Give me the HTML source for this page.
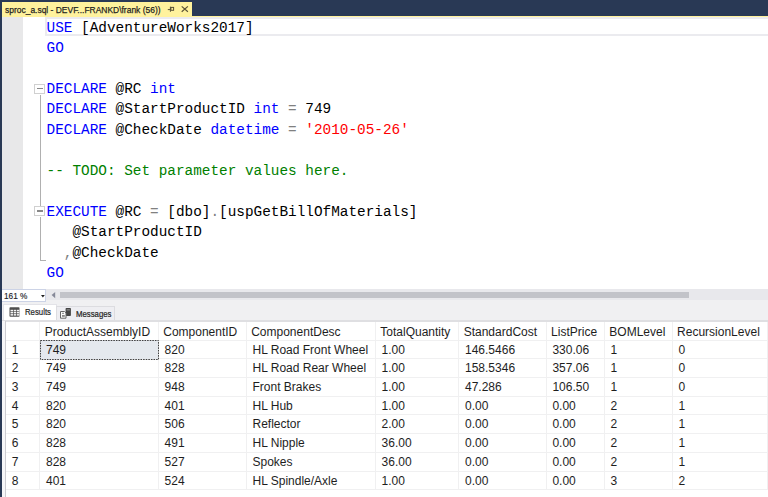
<!DOCTYPE html>
<html><head><meta charset="utf-8">
<style>
*{margin:0;padding:0;box-sizing:border-box}
html,body{width:768px;height:497px;overflow:hidden;background:#293955;position:relative}
div{position:absolute}
#tab{left:2px;top:1.8px;width:190px;height:15.6px;background:#fff29d}
#tabline{left:2px;top:15.5px;width:766px;height:1.9px;background:#fff29d}
#tabtxt{left:4.6px;top:2.4px;font:9.5px/15px "Liberation Sans",sans-serif;color:#1e1e1e;-webkit-text-stroke:0.25px #1e1e1e;white-space:nowrap;transform-origin:0 0;transform:scaleX(0.89)}
#editor{left:2px;top:17.4px;width:766px;height:271.8px;background:#fff}
#margin{left:2px;top:17.4px;width:20.5px;height:271.8px;background:#e8e8e9}
#curline{left:45.2px;top:17.4px;width:730px;height:19.1px;border:2.3px solid #ebebef;border-right:none}
.code{left:46.5px;font:14.38px/20px "Liberation Mono",monospace;white-space:pre;color:#000}
.k{color:#0000ff}.s{color:#ff0000}.c{color:#008000}.g{color:#808080}
.fold{width:11px;height:10.2px;border:1.3px solid #d0d0d0;background:#fff}
.fold:after{content:"";position:absolute;left:2.2px;top:3.2px;width:6px;height:1.6px;background:#888}
.vl{width:1px;background:#b0b0b0}
#bar{left:2px;top:289.1px;width:766px;height:11.4px;background:#e8e8ec}
#zoom{left:2.2px;top:289.1px;width:44.3px;height:12.6px;background:#fff;border:1px solid #ccd3e6;border-left:none}
#zoomtxt{left:4.2px;top:289.7px;font:9.2px/12px "Liberation Sans",sans-serif;color:#1e1e2a;transform-origin:0 0;transform:scaleX(0.9);-webkit-text-stroke:0.15px #1e1e2a}
#thumb{left:60px;top:291.9px;width:628.8px;height:6px;background:#c2c3c9}
#strip{left:2px;top:289px;width:766px;height:34px;background:#f0f0f2}
#grid{left:2px;top:321px;width:766px;height:177px;background:#fff}
#gridtop{left:2px;top:319.8px;width:766px;height:2.7px;background:#dfdfe2}
.cell{font:12px/18.67px "Liberation Sans",sans-serif;color:#1e1e1e;white-space:nowrap}
.hl{left:5.5px;width:762px;height:1px;background:#f0f0f1}
.cl{top:322.3px;width:1px;height:167.9px;background:#f0f0f1}
.sel{background:#e5e9ee;border:1px dotted #404040}
#gridleft{left:5px;top:321px;width:1.2px;height:176px;background:#cbcbd0}
#strip2{left:2px;top:321px;width:3px;height:176px;background:#f6f6f8}
#tabR{left:2.5px;top:303.9px;width:54px;height:17px;background:#fff;border:1px solid #e3e3e8;border-bottom:none}
#tabM{left:56.2px;top:306.3px;width:58.4px;height:15px;background:#eeeef2;border:1px solid #dcdce0;border-bottom:none}
.tabt{font:9px/12px "Liberation Sans",sans-serif;color:#1e1e1e;-webkit-text-stroke:0.2px #1e1e1e;white-space:nowrap;transform-origin:0 0}
</style></head><body>
<div id="tab"></div><div id="tabline"></div>
<div id="tabtxt">sproc_a.sql - DEVF...FRANKD\frank (56))</div>
<svg style="position:absolute;left:0;top:0" width="768" height="20"><g fill="none" stroke="#5a5236" stroke-width="1"><path d="M167.8 9.6 H170.4"/><rect x="170.9" y="7.4" width="2.7" height="2.9"/><path d="M170.4 6.7 V11.8"/><path d="M181.7 6.4 L187.9 11.7 M187.9 6.4 L181.7 11.7" stroke-width="1.2"/></g></svg>
<div id="editor"></div><div id="margin"></div><div id="curline"></div>
<div class="code" style="top:17.50px"><span class="k">USE</span> [AdventureWorks2017]</div>
<div class="code" style="top:37.97px"><span class="k">GO</span></div>
<div class="code" style="top:78.91px"><span class="k">DECLARE</span> @RC <span class="k">int</span></div>
<div class="code" style="top:99.38px"><span class="k">DECLARE</span> @StartProductID <span class="k">int</span> <span class="g">=</span> 749</div>
<div class="code" style="top:119.85px"><span class="k">DECLARE</span> @CheckDate <span class="k">datetime</span> <span class="g">=</span> <span class="s">'2010-05-26'</span></div>
<div class="code" style="top:160.79px"><span class="c">-- TODO: Set parameter values here.</span></div>
<div class="code" style="top:201.73px"><span class="k">EXECUTE</span> @RC <span class="g">=</span> [dbo]<span class="g">.</span>[uspGetBillOfMaterials]</div>
<div class="code" style="top:222.20px">   @StartProductID</div>
<div class="code" style="top:242.67px">  <span class="g">,</span>@CheckDate</div>
<div class="code" style="top:263.14px"><span class="k">GO</span></div>
<div class="fold" style="left:34.3px;top:83.6px"></div>
<div class="vl" style="left:40px;top:95px;height:110.5px"></div>
<div class="fold" style="left:34.3px;top:206px"></div>
<div class="vl" style="left:40px;top:217px;height:44px"></div>
<div style="left:40px;top:260px;width:6px;height:1px;background:#b0b0b0"></div>
<div id="strip"></div><div id="bar"></div><div id="zoom"></div><div id="zoomtxt">161 %</div><div id="thumb"></div>
<svg style="position:absolute;left:0;top:285px" width="70" height="20"><path d="M41 10 H44.8 L42.9 12.4 Z" fill="#1e1e1e"/><path d="M55.2 7 V13.2 L51.6 10.1 Z" fill="#868999"/></svg>
<div id="tabR"></div><div id="tabM"></div>
<div id="grid"></div><div id="gridtop"></div>
<div id="strip2"></div><div id="gridleft"></div>
<div class="tabt" style="left:24.6px;top:306.3px;transform:scaleX(0.865)">Results</div>
<div class="tabt" style="left:76.3px;top:307.9px;transform:scaleX(0.865)">Messages</div>
<svg style="position:absolute;left:0;top:300px" width="80" height="22"><rect x="9.5" y="7.3" width="10" height="9.4" rx="0.8" fill="#4e4e4e"/><rect x="10.5" y="9.8" width="2.5" height="1.5" fill="#f4f4f4"/><rect x="10.5" y="11.9" width="2.5" height="1.5" fill="#f4f4f4"/><rect x="10.5" y="14.1" width="2.5" height="1.5" fill="#f4f4f4"/><rect x="13.7" y="9.8" width="2.5" height="1.5" fill="#f4f4f4"/><rect x="13.7" y="11.9" width="2.5" height="1.5" fill="#f4f4f4"/><rect x="13.7" y="14.1" width="2.5" height="1.5" fill="#f4f4f4"/><rect x="16.9" y="9.8" width="2.5" height="1.5" fill="#f4f4f4"/><rect x="16.9" y="11.9" width="2.5" height="1.5" fill="#f4f4f4"/><rect x="16.9" y="14.1" width="2.5" height="1.5" fill="#f4f4f4"/><rect x="65.6" y="8" width="5.3" height="8" rx="0.8" fill="#444"/><rect x="66.6" y="9" width="3.3" height="1.6" fill="#777"/><path d="M60.5 11.5 H64.5 L66 13 V18.2 H60.5 Z" fill="#fafafa" stroke="#666" stroke-width="1"/><rect x="62" y="15" width="2.8" height="1.8" fill="#888"/><path d="M62 13.3 H64" stroke="#666" stroke-width="0.8"/></svg>
<div class="hl" style="top:339.70px"></div>
<div class="hl" style="top:358.39px"></div>
<div class="hl" style="top:377.08px"></div>
<div class="hl" style="top:395.77px"></div>
<div class="hl" style="top:414.46px"></div>
<div class="hl" style="top:433.15px"></div>
<div class="hl" style="top:451.84px"></div>
<div class="hl" style="top:470.53px"></div>
<div class="hl" style="top:489.22px"></div>
<div class="cl" style="left:39.40px"></div>
<div class="cl" style="left:157.95px"></div>
<div class="cl" style="left:245.90px"></div>
<div class="cl" style="left:375.00px"></div>
<div class="cl" style="left:458.40px"></div>
<div class="cl" style="left:545.80px"></div>
<div class="cl" style="left:604.00px"></div>
<div class="cl" style="left:671.80px"></div>
<div class="cl" style="left:766.90px"></div>
<svg style="position:absolute;left:0;top:0" width="768" height="497"><rect x="40" y="340.2" width="118.5" height="19.2" fill="#e5e9ee"/><rect x="40.5" y="340.5" width="118" height="19" fill="none" stroke="#404040" stroke-width="1" stroke-dasharray="1.6 1"/></svg>
<div class="cell" style="left:44.70px;top:322.70px">ProductAssemblyID</div>
<div class="cell" style="left:163.25px;top:322.70px">ComponentID</div>
<div class="cell" style="left:251.20px;top:322.70px">ComponentDesc</div>
<div class="cell" style="left:380.30px;top:322.70px">TotalQuantity</div>
<div class="cell" style="left:463.70px;top:322.70px">StandardCost</div>
<div class="cell" style="left:551.10px;top:322.70px">ListPrice</div>
<div class="cell" style="left:609.30px;top:322.70px">BOMLevel</div>
<div class="cell" style="left:677.10px;top:322.70px">RecursionLevel</div>
<div class="cell" style="left:11.7px;top:340.70px">1</div>
<div class="cell" style="left:46.00px;top:340.70px">749</div>
<div class="cell" style="left:164.55px;top:340.70px">820</div>
<div class="cell" style="left:252.50px;top:340.70px">HL Road Front Wheel</div>
<div class="cell" style="left:381.60px;top:340.70px">1.00</div>
<div class="cell" style="left:465.00px;top:340.70px">146.5466</div>
<div class="cell" style="left:552.40px;top:340.70px">330.06</div>
<div class="cell" style="left:610.60px;top:340.70px">1</div>
<div class="cell" style="left:678.40px;top:340.70px">0</div>
<div class="cell" style="left:11.7px;top:359.39px">2</div>
<div class="cell" style="left:46.00px;top:359.39px">749</div>
<div class="cell" style="left:164.55px;top:359.39px">828</div>
<div class="cell" style="left:252.50px;top:359.39px">HL Road Rear Wheel</div>
<div class="cell" style="left:381.60px;top:359.39px">1.00</div>
<div class="cell" style="left:465.00px;top:359.39px">158.5346</div>
<div class="cell" style="left:552.40px;top:359.39px">357.06</div>
<div class="cell" style="left:610.60px;top:359.39px">1</div>
<div class="cell" style="left:678.40px;top:359.39px">0</div>
<div class="cell" style="left:11.7px;top:378.08px">3</div>
<div class="cell" style="left:46.00px;top:378.08px">749</div>
<div class="cell" style="left:164.55px;top:378.08px">948</div>
<div class="cell" style="left:252.50px;top:378.08px">Front Brakes</div>
<div class="cell" style="left:381.60px;top:378.08px">1.00</div>
<div class="cell" style="left:465.00px;top:378.08px">47.286</div>
<div class="cell" style="left:552.40px;top:378.08px">106.50</div>
<div class="cell" style="left:610.60px;top:378.08px">1</div>
<div class="cell" style="left:678.40px;top:378.08px">0</div>
<div class="cell" style="left:11.7px;top:396.77px">4</div>
<div class="cell" style="left:46.00px;top:396.77px">820</div>
<div class="cell" style="left:164.55px;top:396.77px">401</div>
<div class="cell" style="left:252.50px;top:396.77px">HL Hub</div>
<div class="cell" style="left:381.60px;top:396.77px">1.00</div>
<div class="cell" style="left:465.00px;top:396.77px">0.00</div>
<div class="cell" style="left:552.40px;top:396.77px">0.00</div>
<div class="cell" style="left:610.60px;top:396.77px">2</div>
<div class="cell" style="left:678.40px;top:396.77px">1</div>
<div class="cell" style="left:11.7px;top:415.46px">5</div>
<div class="cell" style="left:46.00px;top:415.46px">820</div>
<div class="cell" style="left:164.55px;top:415.46px">506</div>
<div class="cell" style="left:252.50px;top:415.46px">Reflector</div>
<div class="cell" style="left:381.60px;top:415.46px">2.00</div>
<div class="cell" style="left:465.00px;top:415.46px">0.00</div>
<div class="cell" style="left:552.40px;top:415.46px">0.00</div>
<div class="cell" style="left:610.60px;top:415.46px">2</div>
<div class="cell" style="left:678.40px;top:415.46px">1</div>
<div class="cell" style="left:11.7px;top:434.15px">6</div>
<div class="cell" style="left:46.00px;top:434.15px">828</div>
<div class="cell" style="left:164.55px;top:434.15px">491</div>
<div class="cell" style="left:252.50px;top:434.15px">HL Nipple</div>
<div class="cell" style="left:381.60px;top:434.15px">36.00</div>
<div class="cell" style="left:465.00px;top:434.15px">0.00</div>
<div class="cell" style="left:552.40px;top:434.15px">0.00</div>
<div class="cell" style="left:610.60px;top:434.15px">2</div>
<div class="cell" style="left:678.40px;top:434.15px">1</div>
<div class="cell" style="left:11.7px;top:452.84px">7</div>
<div class="cell" style="left:46.00px;top:452.84px">828</div>
<div class="cell" style="left:164.55px;top:452.84px">527</div>
<div class="cell" style="left:252.50px;top:452.84px">Spokes</div>
<div class="cell" style="left:381.60px;top:452.84px">36.00</div>
<div class="cell" style="left:465.00px;top:452.84px">0.00</div>
<div class="cell" style="left:552.40px;top:452.84px">0.00</div>
<div class="cell" style="left:610.60px;top:452.84px">2</div>
<div class="cell" style="left:678.40px;top:452.84px">1</div>
<div class="cell" style="left:11.7px;top:471.53px">8</div>
<div class="cell" style="left:46.00px;top:471.53px">401</div>
<div class="cell" style="left:164.55px;top:471.53px">524</div>
<div class="cell" style="left:252.50px;top:471.53px">HL Spindle/Axle</div>
<div class="cell" style="left:381.60px;top:471.53px">1.00</div>
<div class="cell" style="left:465.00px;top:471.53px">0.00</div>
<div class="cell" style="left:552.40px;top:471.53px">0.00</div>
<div class="cell" style="left:610.60px;top:471.53px">3</div>
<div class="cell" style="left:678.40px;top:471.53px">2</div>
</body></html>
